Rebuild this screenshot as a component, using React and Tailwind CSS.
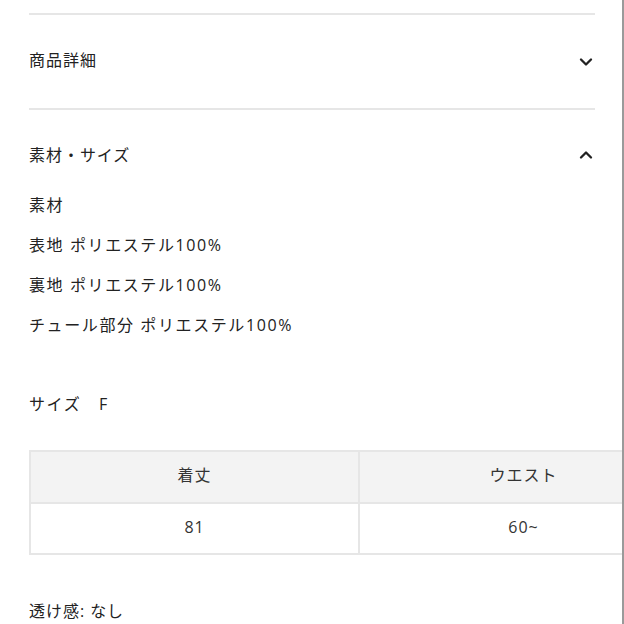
import { ChevronDown, ChevronUp } from 'lucide-react';

const font = { fontFamily: '"Open Sans", "Noto Sans CJK JP", "Noto Sans", sans-serif' };

export default function App() {
  return (
    <div className="relative h-[624px] w-[624px] overflow-hidden bg-white text-[#222]" style={font}>
      <div className="pl-[29px]">
        {/* divider */}
        <div className="mt-[13px] h-[2px] w-[566px] bg-[#e6e6e6]" />

        {/* 商品詳細 */}
        <div className="flex h-[93px] w-[566px] items-center justify-between pb-[4px]">
          <span className="text-[16px] tracking-[0.06em]">商品詳細</span>
          <ChevronDown className="mr-[-1px] mt-[4px] h-[20px] w-[20px]" strokeWidth={2.8} />
        </div>

        <div className="h-[2px] w-[566px] bg-[#e6e6e6]" />

        {/* 素材・サイズ */}
        <div className="flex h-[75px] w-[566px] items-center justify-between pt-[14px]">
          <span className="text-[16px] tracking-[0.06em]">素材・サイズ</span>
          <ChevronUp className="mr-[-1px] h-[20px] w-[20px]" strokeWidth={2.8} />
        </div>

        <div className="text-[16px] leading-[40px] tracking-[0.1em]">
          <p>素材</p>
          <p>表地 ポリエステル100%</p>
          <p>裏地 ポリエステル100%</p>
          <p>チュール部分 ポリエステル100%</p>
          <p className="mt-[39px]">サイズ　F</p>
        </div>

        <table className="mt-[26px] w-[660px] border-collapse text-center text-[16px] tracking-[0.06em] text-[#333]">
          <thead>
            <tr className="h-[52px] bg-[#f3f3f3]">
              <th className="w-1/2 border-2 border-[#e6e6e6] pb-[4px] font-normal">着丈</th>
              <th className="w-1/2 border-2 border-[#e6e6e6] pb-[4px] font-normal">ウエスト</th>
            </tr>
          </thead>
          <tbody>
            <tr className="h-[51px]">
              <td className="border-2 border-[#e6e6e6] pb-[4px]">81</td>
              <td className="border-2 border-[#e6e6e6] pb-[4px]">60~</td>
            </tr>
          </tbody>
        </table>

        <p className="mt-[36px] text-[16px] leading-[40px] tracking-[0.06em]">透け感: なし</p>
      </div>

      {/* right edge line */}
      <div className="absolute right-0 top-0 h-full w-[2px] bg-[#9a9a9a]" />
    </div>
  );
}
